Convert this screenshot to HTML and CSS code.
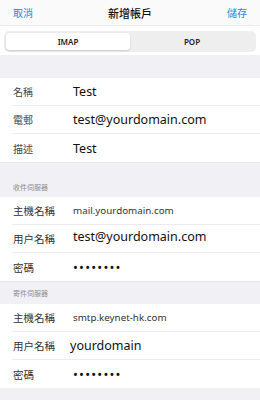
FILE: index.html
```html
<!DOCTYPE html>
<html>
  <head>
    <meta charset="UTF-8" />
    <meta name="viewport" content="width=device-width, initial-scale=1.0" />
    <title>新增帳戶</title>
    <link rel="stylesheet" href="styles.css">
  </head>
  <body>
    <div class="nav">
      <div class="nav-link">取消</div>
      <div class="nav-title">新增帳戶</div>
      <div class="nav-link">儲存</div>
    </div>

    <div class="segment-bar">
      <div class="segment">
        <div class="segment-item active">IMAP</div>
        <div class="segment-item">POP</div>
      </div>
    </div>

    <div class="gap"></div>

    <div class="group">
      <div class="row">
        <div class="label small">名稱</div>
        <div class="value">Test</div>
      </div>
      <div class="row">
        <div class="label small">電郵</div>
        <div class="value">test@yourdomain.com</div>
      </div>
      <div class="row">
        <div class="label small">描述</div>
        <div class="value">Test</div>
      </div>
    </div>

    <div class="section-header tall">收件伺服器</div>

    <div class="group">
      <div class="row">
        <div class="label">主機名稱</div>
        <div class="value thin">mail.yourdomain.com</div>
      </div>
      <div class="row">
        <div class="label">用户名稱</div>
        <div class="value raised">test@yourdomain.com</div>
      </div>
      <div class="row">
        <div class="label">密碼</div>
        <div class="value dots">••••••••</div>
      </div>
    </div>

    <div class="section-header">寄件伺服器</div>

    <div class="group">
      <div class="row">
        <div class="label">主機名稱</div>
        <div class="value thin">smtp.keynet-hk.com</div>
      </div>
      <div class="row">
        <div class="label">用户名稱</div>
        <div class="value shifted">yourdomain</div>
      </div>
      <div class="row">
        <div class="label">密碼</div>
        <div class="value dots">••••••••</div>
      </div>
    </div>
  </body>
</html>
```

FILE: styles.css
```css
body {
  margin: 0;
  background-color: #f0f0f5;
  color: #222;
  font-family: "Noto Sans", "Noto Sans CJK TC", sans-serif;
  width: 260px;
  height: 400px;
  overflow: hidden;
}

.nav {
  height: 26px;
  padding: 0 13px;
  background-color: #fafafa;
  display: flex;
  justify-content: space-between;
  align-items: center;
  border-bottom: 1px solid #ececef;
  box-sizing: border-box;
}

.nav-link {
  color: #2d86e2;
  font-size: 10px;
  font-family: "Noto Sans CJK TC", sans-serif;
}

.nav-title {
  font-size: 11px;
  font-weight: 500;
  color: #111;
  font-family: "Noto Sans CJK TC", sans-serif;
}

.segment-bar {
  background-color: #fff;
  padding: 5px 4px 3px;
  height: 29px;
  box-sizing: border-box;
}

.segment {
  display: flex;
  height: 21px;
  background-color: #eeeeef;
  border-radius: 5px;
  padding: 2px;
  box-sizing: border-box;
}

.segment-item {
  flex: 1;
  display: flex;
  justify-content: center;
  align-items: center;
  font-size: 8px;
  font-weight: 600;
  color: #222;
}

.segment-item.active {
  background-color: #fff;
  border-radius: 4px;
  box-shadow: 0 1px 2px rgba(0, 0, 0, 0.15);
}

.gap {
  height: 23px;
}

.group {
  background-color: #fff;
}

.row {
  height: 28px;
  margin-left: 12px;
  padding-left: 1px;
  display: flex;
  align-items: center;
  border-bottom: 1px solid #ededf0;
  box-sizing: border-box;
}

.row:last-child {
  border-bottom: none;
}

.label {
  width: 60px;
  flex-shrink: 0;
  font-size: 10.5px;
  color: #333;
  font-family: "Noto Sans CJK TC", sans-serif;
}

.label.small {
  font-size: 10px;
  color: #444;
}

.value {
  font-size: 12.5px;
  color: #111;
}

.value.thin {
  font-size: 9.8px;
  color: #333;
}

.value.raised {
  margin-top: -5px;
}

.value.shifted {
  margin-left: -3px;
}

.value.dots {
  font-size: 13px;
  letter-spacing: 1.2px;
  color: #111;
}

.section-header {
  height: 23px;
  padding-left: 13px;
  display: flex;
  align-items: center;
  font-size: 7px;
  color: #8e8e93;
  font-family: "Noto Sans CJK TC", sans-serif;
  border-top: 1px solid #e8e8ec;
  box-sizing: border-box;
}

.section-header.tall {
  height: 35px;
  align-items: flex-end;
  padding-bottom: 5px;
}
```
